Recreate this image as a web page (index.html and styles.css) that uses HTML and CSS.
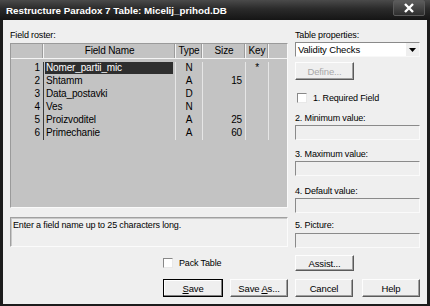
FILE: index.html
```html
<!DOCTYPE html>
<html lang="en">
<head>
    <meta charset="UTF-8">
    <title>Restructure Paradox 7 Table</title>
    <link rel="stylesheet" href="styles.css">
</head>
<body>
    <div class="window">
        <!-- Title bar -->
        <div class="titlebar">
            <span class="title">Restructure Paradox 7 Table: Micelij_prihod.DB</span>
            <span class="close">
                <svg width="12" height="10" viewBox="0 0 12 10">
                    <path d="M2 1 L10 9 M10 1 L2 9" stroke="#fff" stroke-width="2.4" fill="none"/>
                </svg>
            </span>
        </div>

        <div class="client">
            <div class="main">
                <!-- Field roster -->
                <div class="left">
                    <div class="label">Field roster:</div>
                    <div class="grid">
                        <div class="grid-head">
                            <div class="hcell"></div>
                            <div class="hcell">Field Name</div>
                            <div class="hcell">Type</div>
                            <div class="hcell">Size</div>
                            <div class="hcell">Key</div>
                            <div class="hcell last"></div>
                        </div>
                        <div class="grid-body">
                            <div class="row">
                                <span class="num">1</span>
                                <span class="name"><span class="sel">Nomer_partii_mic</span></span>
                                <span class="type">N</span>
                                <span class="size"></span>
                                <span class="key">*</span>
                            </div>
                            <div class="row">
                                <span class="num">2</span>
                                <span class="name">Shtamm</span>
                                <span class="type">A</span>
                                <span class="size">15</span>
                                <span class="key"></span>
                            </div>
                            <div class="row">
                                <span class="num">3</span>
                                <span class="name">Data_postavki</span>
                                <span class="type">D</span>
                                <span class="size"></span>
                                <span class="key"></span>
                            </div>
                            <div class="row">
                                <span class="num">4</span>
                                <span class="name">Ves</span>
                                <span class="type">N</span>
                                <span class="size"></span>
                                <span class="key"></span>
                            </div>
                            <div class="row">
                                <span class="num">5</span>
                                <span class="name">Proizvoditel</span>
                                <span class="type">A</span>
                                <span class="size">25</span>
                                <span class="key"></span>
                            </div>
                            <div class="row">
                                <span class="num">6</span>
                                <span class="name">Primechanie</span>
                                <span class="type">A</span>
                                <span class="size">60</span>
                                <span class="key"></span>
                            </div>
                        </div>
                    </div>
                    <div class="status">Enter a field name up to 25 characters long.</div>
                    <div class="check pack"><span class="box"></span>Pack Table</div>
                </div>

                <!-- Table properties -->
                <div class="right">
                    <div class="label">Table properties:</div>
                    <div class="select">
                        <span>Validity Checks</span>
                        <span class="arrow">
                            <svg width="7" height="4" viewBox="0 0 7 4"><path d="M0 0 H7 L3.5 4 Z" fill="#000"/></svg>
                        </span>
                    </div>
                    <div class="btn small disabled define">Define...</div>
                    <div class="check required"><span class="box"></span>1. Required Field</div>
                    <div class="label l2">2. Minimum value:</div>
                    <div class="field"></div>
                    <div class="label l3">3. Maximum value:</div>
                    <div class="field"></div>
                    <div class="label l4">4. Default value:</div>
                    <div class="field"></div>
                    <div class="label l5">5. Picture:</div>
                    <div class="field f5"></div>
                    <div class="btn small assist">Assist...</div>
                </div>
            </div>

            <div class="buttons">
                <div class="btn default"><span><u>S</u>ave</span></div>
                <div class="btn"><span>Save <u>A</u>s...</span></div>
                <div class="btn cancel">Cancel</div>
                <div class="btn">Help</div>
            </div>
        </div>
    </div>
</body>
</html>
```

FILE: styles.css
```css
body {
    margin: 0;
    font-family: "Liberation Sans", Arial, sans-serif;
    font-size: 9px;
    letter-spacing: -0.15px;
    color: #000;
    background: #000;
}
.window {
    width: 430px;
    height: 306px;
    box-sizing: border-box;
    background: #1c1c1c;
    padding: 0 3px 2px 3px;
    display: flex;
    flex-direction: column;
}
.titlebar {
    height: 20px;
    margin: 0 -3px;
    padding: 0 5px 0 6px;
    display: flex;
    align-items: center;
    justify-content: space-between;
    background: linear-gradient(to bottom, #4a4a4a, #2a2a2a 45%, #151515);
}
.title {
    color: #fff;
    font-weight: bold;
    font-size: 9.8px;
    letter-spacing: 0;
}
.close {
    width: 30px;
    height: 14px;
    margin-top: -4px;
    display: flex;
    align-items: center;
    justify-content: center;
    border: 1px solid #5a5a5a;
    border-radius: 2px;
    background: linear-gradient(to bottom, #5c5c5c, #2e2e2e);
}
.client {
    flex: 1;
    background: #efefef;
    padding: 9px 7px 0 7px;
}
.main {
    display: flex;
    gap: 7px;
}
.left {
    width: 278px;
    display: flex;
    flex-direction: column;
}
.right {
    width: 125px;
    display: flex;
    flex-direction: column;
}
.label {
    height: 12px;
    line-height: 12px;
}

/* field roster grid */
.grid {
    margin-top: 2px;
    height: 165px;
    box-sizing: border-box;
    background: #c3c3c3;
    border: 1px solid;
    border-color: #9a9a9a #fafafa #fafafa #9a9a9a;
}
.grid-head, .row {
    display: grid;
    grid-template-columns: 33px 132px 27px 43px 23px 1fr;
}
.grid-head {
    height: 15px;
    line-height: 14px;
    font-size: 10px;
    border-bottom: 1px solid #f4f4f4;
    box-sizing: border-box;
}
.hcell {
    text-align: center;
    border-right: 1px solid #f4f4f4;
    box-shadow: inset -1px 0 #9c9c9c;
}
.hcell.last {
    border-right: none;
    box-shadow: none;
}
.grid-body {
    padding-top: 3px;
}
.row {
    height: 13px;
    line-height: 12px;
    font-size: 10px;
}
.row span {
    border-right: 1px solid #e6e6e6;
}
.row .num {
    text-align: right;
    padding-right: 3px;
    border-right: 1px solid #3a3a3a;
}
.row .name {
    padding-left: 2px;
}
.row .name .sel {
    display: block;
    margin-left: -1px;
    margin-right: 2px;
    height: 12px;
    padding-left: 1px;
    border: none;
    background: #2e2e2e;
    color: #fff;
}
.row .type {
    text-align: center;
}
.row .size {
    text-align: right;
    padding-right: 3px;
}
.row .key {
    text-align: center;
}

.status {
    margin-top: 9px;
    height: 30px;
    box-sizing: border-box;
    padding: 2px 2px;
    border: 1px solid;
    border-color: #a0a0a0 #fbfbfb #fbfbfb #a0a0a0;
    box-shadow: 1px 1px 0 #c8c8c8 inset;
}

/* checkboxes */
.check {
    display: flex;
    align-items: center;
    height: 13px;
}
.check .box {
    width: 8px;
    height: 8px;
    margin-right: 6px;
    background: #fff;
    border: 1px solid;
    border-color: #888 #e8e8e8 #e8e8e8 #888;
}
.pack {
    margin-top: 9px;
    margin-left: 153px;
}
.required {
    margin-top: 11px;
    margin-left: 2px;
}

/* right panel */
.select {
    margin-top: 1px;
    height: 15px;
    box-sizing: border-box;
    background: #fff;
    border: 1px solid;
    border-color: #8a8a8a #f8f8f8 #f8f8f8 #8a8a8a;
    display: flex;
    align-items: center;
    justify-content: space-between;
    padding-left: 2px;
    font-size: 9.5px;
}
.select .arrow {
    width: 13px;
    height: 13px;
    display: flex;
    align-items: center;
    justify-content: center;
    background: #efefef;
}
.field {
    margin-top: 1px;
    height: 15px;
    box-sizing: border-box;
    border: 1px solid;
    border-color: #8a8a8a #fafafa #fafafa #8a8a8a;
    background: #efefef;
}
.l2 { margin-top: 8px; }
.l3 { margin-top: 8px; }
.l4 { margin-top: 9px; }
.l5 { margin-top: 6px; }
.f5 { margin-top: 2px; }

/* buttons */
.btn {
    height: 18px;
    box-sizing: border-box;
    display: flex;
    align-items: center;
    justify-content: center;
    background: #efefef;
    border: 1px solid;
    border-color: #fdfdfd #5a5a5a #5a5a5a #fdfdfd;
    box-shadow: inset -1px -1px #a0a0a0;
    font-size: 9.5px;
}
.btn u {
    text-decoration: underline;
}
.btn.small {
    width: 59px;
}
.define {
    margin-top: 5px;
    height: 18px;
}
.disabled {
    color: #a8a8a8;
}
.assist {
    margin-top: 7px;
    height: 16px;
}
.buttons {
    margin-top: 8px;
    margin-left: 153px;
    display: flex;
    gap: 7px;
}
.buttons .btn {
    width: 58px;
}
.buttons .default {
    width: 60px;
    border: 1px solid #000;
    box-shadow: inset -1px -1px #808080, inset 1px 1px #fff;
}
.buttons .cancel {
    margin-right: 2px;
}
```
